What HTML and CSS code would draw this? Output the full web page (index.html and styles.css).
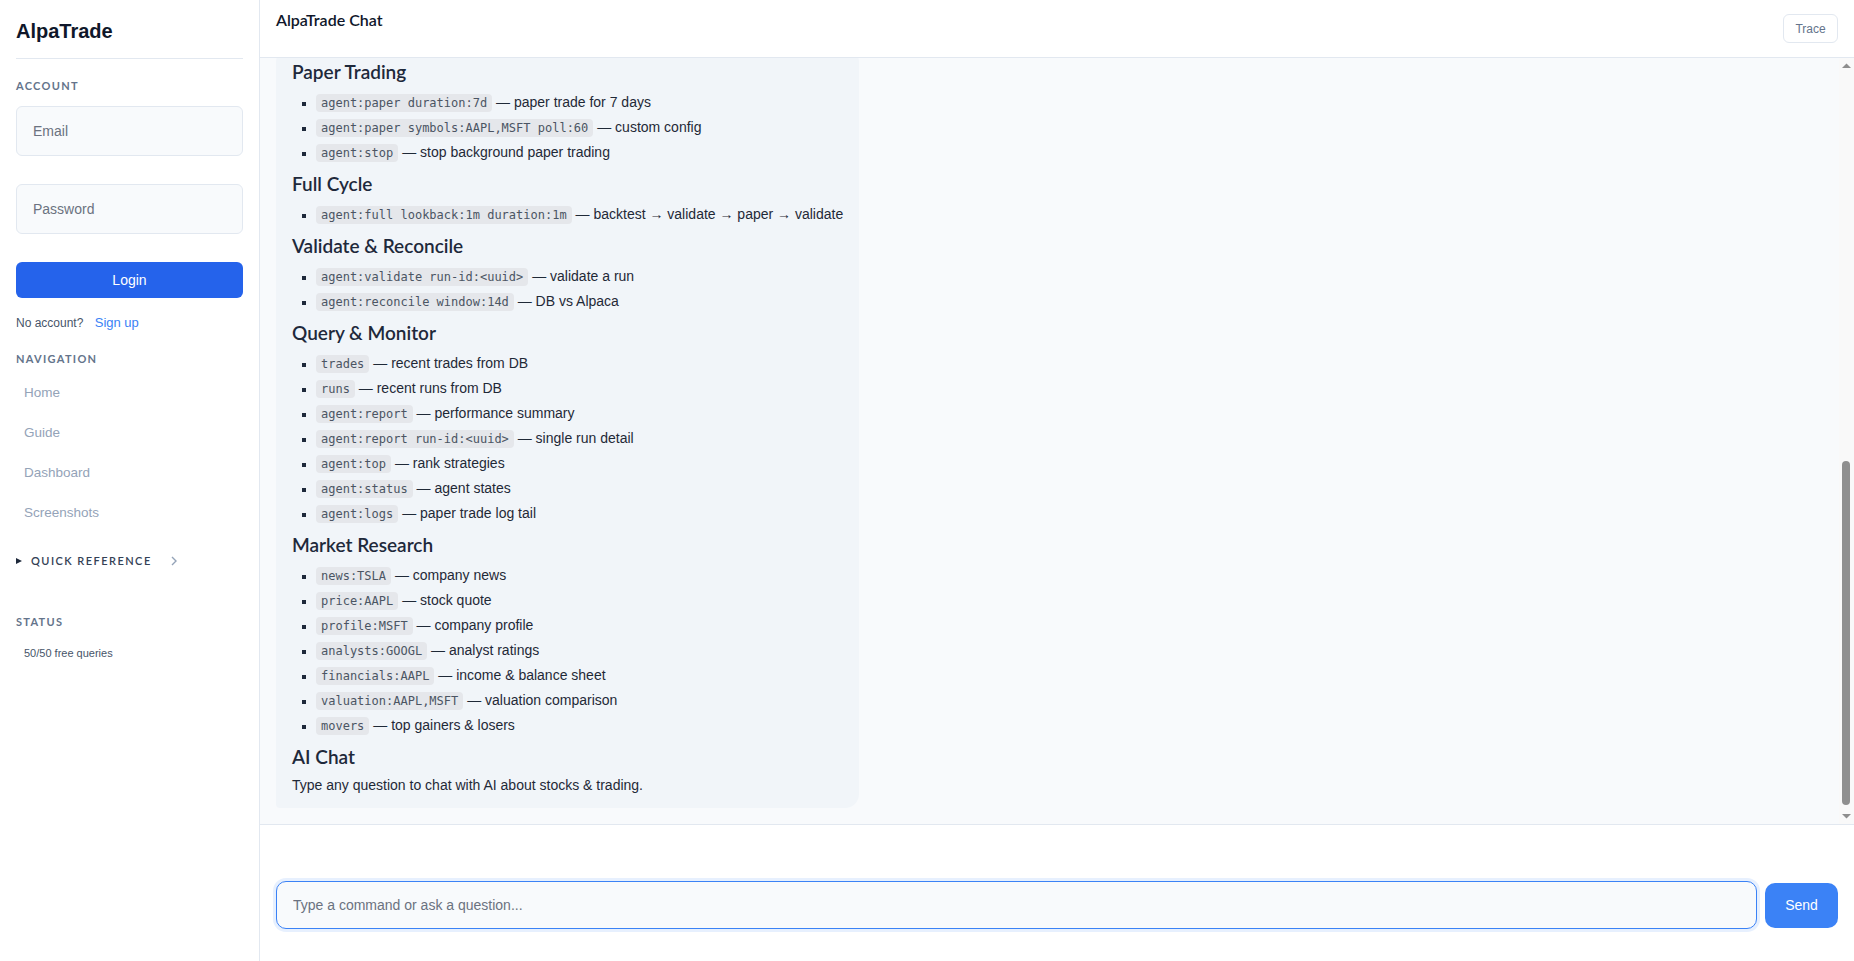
FILE: index.html
```html
<!DOCTYPE html>
<html lang="en">
<head>
    <meta charset="UTF-8">
    <meta name="viewport" content="width=device-width, initial-scale=1.0">
    <title>AlpaTrade Chat</title>
    <link rel="stylesheet" href="styles.css">
</head>
<body>
    <aside class="sidebar">
        <h1 class="brand">AlpaTrade</h1>

        <div class="section account">
            <div class="section-label">Account</div>
            <input class="field" type="email" placeholder="Email">
            <input class="field" type="password" placeholder="Password">
            <button class="login-btn">Login</button>
            <p class="signup">No account? <a href="#">Sign up</a></p>
        </div>

        <div class="section">
            <div class="section-label">Navigation</div>
            <nav class="nav">
                <a href="#">Home</a>
                <a href="#">Guide</a>
                <a href="#">Dashboard</a>
                <a href="#">Screenshots</a>
            </nav>
        </div>

        <details class="quick-ref">
            <summary>
                <span class="caret"></span>
                <span>Quick Reference</span>
                <svg class="chevron" width="8" height="12" viewBox="0 0 8 12"><polyline points="2,2 6,6 2,10" fill="none" stroke="#94a3b8" stroke-width="1.4"/></svg>
            </summary>
        </details>

        <div class="section status">
            <div class="section-label">Status</div>
            <p class="queries">50/50 free queries</p>
        </div>
    </aside>

    <main class="chat">
        <header class="chat-header">
            <h2>AlpaTrade Chat</h2>
            <button class="trace-btn">Trace</button>
        </header>

        <div class="messages-pane">
            <div class="messages">
                <div class="bubble">
                    <h3>Paper Trading</h3>
                    <ul>
                        <li><code>agent:paper duration:7d</code> — paper trade for 7 days</li>
                        <li><code>agent:paper symbols:AAPL,MSFT poll:60</code> — custom config</li>
                        <li><code>agent:stop</code> — stop background paper trading</li>
                    </ul>

                    <h3>Full Cycle</h3>
                    <ul>
                        <li><code>agent:full lookback:1m duration:1m</code> — backtest → validate → paper → validate</li>
                    </ul>

                    <h3>Validate &amp; Reconcile</h3>
                    <ul>
                        <li><code>agent:validate run-id:&lt;uuid&gt;</code> — validate a run</li>
                        <li><code>agent:reconcile window:14d</code> — DB vs Alpaca</li>
                    </ul>

                    <h3>Query &amp; Monitor</h3>
                    <ul>
                        <li><code>trades</code> — recent trades from DB</li>
                        <li><code>runs</code> — recent runs from DB</li>
                        <li><code>agent:report</code> — performance summary</li>
                        <li><code>agent:report run-id:&lt;uuid&gt;</code> — single run detail</li>
                        <li><code>agent:top</code> — rank strategies</li>
                        <li><code>agent:status</code> — agent states</li>
                        <li><code>agent:logs</code> — paper trade log tail</li>
                    </ul>

                    <h3>Market Research</h3>
                    <ul>
                        <li><code>news:TSLA</code> — company news</li>
                        <li><code>price:AAPL</code> — stock quote</li>
                        <li><code>profile:MSFT</code> — company profile</li>
                        <li><code>analysts:GOOGL</code> — analyst ratings</li>
                        <li><code>financials:AAPL</code> — income &amp; balance sheet</li>
                        <li><code>valuation:AAPL,MSFT</code> — valuation comparison</li>
                        <li><code>movers</code> — top gainers &amp; losers</li>
                    </ul>

                    <h3>AI Chat</h3>
                    <p>Type any question to chat with AI about stocks &amp; trading.</p>
                </div>
            </div>

            <div class="rail">
                <svg class="rail-arrow" width="15" height="15" viewBox="0 0 15 15"><path d="M3 10 L7.5 5.5 L12 10 Z" fill="#8e8e8e"/></svg>
                <div class="rail-track">
                    <div class="rail-thumb"></div>
                </div>
                <svg class="rail-arrow" width="15" height="15" viewBox="0 0 15 15"><path d="M3 5 L7.5 9.5 L12 5 Z" fill="#8e8e8e"/></svg>
            </div>
        </div>

        <form class="composer" onsubmit="return false">
            <input class="prompt" type="text" placeholder="Type a command or ask a question...">
            <button class="send-btn" type="submit">Send</button>
        </form>
    </main>
</body>
</html>
```

FILE: styles.css
```css
* {
    box-sizing: border-box;
}
html, body {
    height: 100%;
}
body {
    margin: 0;
    display: flex;
    font-family: "Liberation Sans", Arial, sans-serif;
    font-size: 14px;
    color: #1e293b;
    background-color: #ffffff;
    overflow: hidden;
}

/* ---- sidebar ---- */
.sidebar {
    width: 260px;
    flex-shrink: 0;
    height: 100%;
    padding: 18px 16px;
    border-right: 1px solid #e2e8f0;
    overflow-y: auto;
}
.brand {
    margin: 0;
    font-size: 20px;
    line-height: 26px;
    font-weight: bold;
    color: #0f172a;
    padding-bottom: 14px;
    border-bottom: 1px solid #e2e8f0;
}
.section-label {
    font-family: Lato, sans-serif;
    font-size: 11px;
    line-height: 14px;
    font-weight: 700;
    letter-spacing: 1.3px;
    text-transform: uppercase;
    color: #64748b;
}
.account {
    margin-top: 18px;
}
.account .section-label {
    margin-bottom: 13px;
}
.field {
    display: block;
    width: 100%;
    height: 50px;
    margin-bottom: 28px;
    padding: 0 16px;
    font-family: "Liberation Sans", Arial, sans-serif;
    font-size: 14px;
    color: #1e293b;
    background-color: #f8fafc;
    border: 1px solid #e2e8f0;
    border-radius: 6px;
    outline: none;
}
.field::placeholder {
    color: #6b7280;
}
.login-btn {
    display: block;
    width: 100%;
    height: 36px;
    border: none;
    border-radius: 6px;
    background-color: #2563eb;
    color: #ffffff;
    font-family: "Liberation Sans", Arial, sans-serif;
    font-size: 14px;
    cursor: pointer;
}
.signup {
    margin: 16px 0 0;
    font-size: 12px;
    line-height: 18px;
    color: #475569;
}
.signup a {
    margin-left: 8px;
    font-size: 13px;
    color: #3b82f6;
    text-decoration: none;
}
.section {
    margin-top: 20px;
}
.nav {
    display: flex;
    flex-direction: column;
    margin-top: 7px;
}
.nav a {
    padding: 10px 8px;
    font-size: 13.5px;
    line-height: 20px;
    color: #94a3b8;
    text-decoration: none;
}
.quick-ref {
    margin-top: 21px;
}
.quick-ref summary {
    display: flex;
    align-items: center;
    list-style: none;
    font-family: Lato, sans-serif;
    font-size: 11px;
    line-height: 14px;
    font-weight: 600;
    letter-spacing: 1.45px;
    text-transform: uppercase;
    color: #334155;
    cursor: pointer;
}
.quick-ref summary::-webkit-details-marker {
    display: none;
}
.caret {
    width: 0;
    height: 0;
    margin-right: 9px;
    border-top: 3.5px solid transparent;
    border-bottom: 3.5px solid transparent;
    border-left: 6px solid #1e293b;
}
.chevron {
    margin-left: 18px;
}
.status {
    margin-top: 47px;
}
.queries {
    margin: 17px 0 0;
    padding-left: 8px;
    font-size: 11px;
    line-height: 14px;
    color: #475569;
}

/* ---- chat area ---- */
.chat {
    flex: 1;
    min-width: 0;
    height: 100%;
    display: flex;
    flex-direction: column;
}
.chat-header {
    height: 58px;
    flex-shrink: 0;
    display: flex;
    justify-content: space-between;
    align-items: flex-start;
    padding: 0 16px;
    border-bottom: 1px solid #e2e8f0;
}
.chat-header h2 {
    margin: 11px 0 0;
    font-family: Lato, sans-serif;
    font-size: 16px;
    line-height: 18px;
    font-weight: 600;
    color: #0f172a;
}
.trace-btn {
    margin-top: 14px;
    width: 55px;
    height: 29px;
    padding: 0;
    background-color: #ffffff;
    border: 1px solid #e2e8f0;
    border-radius: 6px;
    font-family: "Liberation Sans", Arial, sans-serif;
    font-size: 12px;
    color: #64748b;
    cursor: pointer;
}

.messages-pane {
    position: relative;
    flex: 1;
    min-height: 0;
    background-color: #f8fafc;
}
/* newest message pinned to the bottom */
.messages {
    height: 100%;
    overflow: hidden;
    display: flex;
    flex-direction: column;
    justify-content: flex-end;
    align-items: flex-start;
    padding: 0 31px 16px 16px;
}
.bubble {
    flex-shrink: 0;
    padding: 12px 16px 12px;
    background-color: #f1f5f9;
    border-radius: 14px 14px 14px 4px;
    line-height: 21px;
    color: #1f2937;
}
.bubble h3 {
    margin: 9px 0 8px;
    font-family: Lato, sans-serif;
    font-size: 19px;
    line-height: 24px;
    font-weight: 600;
    color: #1e293b;
}
.bubble h3:first-child {
    margin-top: 0;
}
.bubble p {
    margin: -2px 0 0;
}
.bubble ul {
    margin: 0;
    padding-left: 24px;
    list-style: square;
}
.bubble li {
    margin-bottom: 4px;
}
.bubble li::marker {
    color: #1e293b;
    font-size: 12px;
}
.bubble code {
    padding: 2px 5px;
    font-family: "DejaVu Sans Mono", monospace;
    font-size: 12px;
    line-height: 14px;
    color: #4b5563;
    background-color: #e5e7eb;
    border-radius: 4px;
}

.rail {
    position: absolute;
    top: 0;
    right: 0;
    bottom: 0;
    width: 15px;
    display: flex;
    flex-direction: column;
    background-color: #f9f9f9;
}
.rail-arrow {
    flex-shrink: 0;
    display: block;
}
.rail-track {
    flex: 1;
    display: flex;
    flex-direction: column;
    justify-content: flex-end;
    padding: 0 4px 4px 3px;
}
.rail-thumb {
    height: 344px;
    background-color: #8f8f8f;
    border-radius: 4px;
}

/* ---- input bar ---- */
.composer {
    flex-shrink: 0;
    display: flex;
    align-items: center;
    gap: 8px;
    margin: 0;
    padding: 56px 16px 32px;
    border-top: 1px solid #e2e8f0;
}
.prompt {
    flex: 1;
    height: 48px;
    padding: 0 16px;
    font-family: "Liberation Sans", Arial, sans-serif;
    font-size: 14px;
    color: #1e293b;
    background-color: #f8fafc;
    border: 1px solid #3b82f6;
    border-radius: 10px;
    box-shadow: 0 0 0 3px rgba(59, 130, 246, 0.12);
    outline: none;
}
.prompt::placeholder {
    color: #6b7280;
}
.send-btn {
    width: 73px;
    height: 45px;
    border: none;
    border-radius: 10px;
    background-color: #3b82f6;
    color: #ffffff;
    font-family: "Liberation Sans", Arial, sans-serif;
    font-size: 14px;
    cursor: pointer;
}
```
